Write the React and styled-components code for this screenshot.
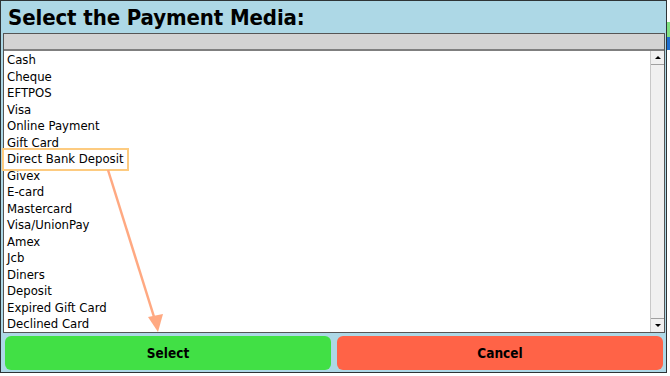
import React from "react";
import styled, { createGlobalStyle } from "styled-components";

const media = [
  "Cash",
  "Cheque",
  "EFTPOS",
  "Visa",
  "Online Payment",
  "Gift Card",
  "Direct Bank Deposit",
  "Givex",
  "E-card",
  "Mastercard",
  "Visa/UnionPay",
  "Amex",
  "Jcb",
  "Diners",
  "Deposit",
  "Expired Gift Card",
  "Declined Card",
];

const GlobalStyle = createGlobalStyle`
  html, body {
    margin: 0;
    padding: 0;
    background: #ffffff;
  }
  body {
    font-family: "DejaVu Sans Condensed", "DejaVu Sans", sans-serif;
    color: #000;
  }
`;

const Page = styled.div`
  position: relative;
  width: 670px;
  height: 376px;
  overflow: hidden;
  display: flex;
  align-items: flex-start;
`;

const Dialog = styled.div`
  box-sizing: border-box;
  width: 667px;
  height: 373px;
  border: 1px solid #2e3436;
  background: #add8e6;
  display: flex;
  flex-direction: column;
`;

const Title = styled.h1`
  margin: 0;
  height: 32px;
  padding-left: 7px;
  font-size: 22px;
  font-weight: bold;
  line-height: 34px;
  letter-spacing: -0.1px;
`;

const ListPanel = styled.div`
  box-sizing: border-box;
  height: 300px;
  margin: 0 1px 0 2px;
  border: 1px solid #555;
  display: flex;
  flex-direction: column;
  overflow: hidden;
`;

const HeaderRow = styled.div`
  height: 15px;
  flex: none;
  background: #d3d3d3;
  border-bottom: 2px solid #7f7f7f;
`;

const ListBody = styled.div`
  flex: 1;
  display: flex;
  background: #fff;
  overflow: hidden;
`;

const Items = styled.ul`
  flex: 1;
  margin: 0;
  padding: 0.5px 0 0 3px;
  list-style: none;
`;

const Item = styled.li`
  box-sizing: border-box;
  height: 16.5px;
  padding-top: 2.6px;
  line-height: 12px;
  font-size: 13px;
  white-space: nowrap;
`;

const ScrollBar = styled.div`
  width: 13px;
  flex: none;
  background: #f0f0f0;
  border-left: 1px solid #c8c8c8;
  display: flex;
  flex-direction: column;
  justify-content: space-between;
`;

const ScrollButton = styled.div`
  height: 13px;
  background: #f0f0f0;
  border-bottom: ${(p) => (p.$down ? "none" : "1px solid #a0a0a0")};
  border-top: ${(p) => (p.$down ? "1px solid #a0a0a0" : "none")};
  display: flex;
  align-items: center;
  justify-content: center;

  &::after {
    content: "";
    width: 0;
    height: 0;
    border-left: 3px solid transparent;
    border-right: 3px solid transparent;
    ${(p) =>
      p.$down
        ? "border-top: 3px solid #000;"
        : "border-bottom: 3px solid #000;"}
  }
`;

const ButtonRow = styled.div`
  display: grid;
  grid-template-columns: 326px 326px;
  gap: 6px;
  padding: 3px 0 0 4px;
`;

const ActionButton = styled.button`
  height: 34px;
  border: none;
  border-radius: 6px;
  background: ${(p) => p.$bg};
  font-family: "DejaVu Sans Condensed", "DejaVu Sans", sans-serif;
  font-size: 13.5px;
  font-weight: bold;
  color: #000;
  padding: 0;
`;

const SideStrip = styled.div`
  display: flex;
  flex-direction: column;
  width: 3px;
  padding-top: 22px;
`;

const SideBit = styled.div`
  height: ${(p) => p.$h}px;
  background: ${(p) => p.$bg};
`;

const Highlight = styled.div`
  position: absolute;
  left: 2px;
  top: 148px;
  width: 127px;
  height: 23px;
  box-sizing: border-box;
  border: 2px solid #fdcb80;
  pointer-events: none;
`;

const Arrow = styled.svg`
  position: absolute;
  left: 0;
  top: 0;
  pointer-events: none;
`;

export default function App() {
  return (
    <>
      <GlobalStyle />
      <Page>
        <Dialog>
          <Title>Select the Payment Media:</Title>
          <ListPanel>
            <HeaderRow />
            <ListBody>
              <Items>
                {media.map((m) => (
                  <Item key={m}>{m}</Item>
                ))}
              </Items>
              <ScrollBar>
                <ScrollButton />
                <ScrollButton $down />
              </ScrollBar>
            </ListBody>
          </ListPanel>
          <ButtonRow>
            <ActionButton $bg="#41e045">Select</ActionButton>
            <ActionButton $bg="#ff6347">Cancel</ActionButton>
          </ButtonRow>
        </Dialog>
        <SideStrip>
          <SideBit $h={15} $bg="#7fe07f" />
          <SideBit $h={13} $bg="#1e6fd0" />
        </SideStrip>
        <Highlight />
        <Arrow width="670" height="376">
          <line x1="108" y1="170" x2="155" y2="320" stroke="#ffa982" strokeWidth="2.5" />
          <polygon points="148,317 163,314 158,332" fill="#ffa982" />
        </Arrow>
      </Page>
    </>
  );
}
